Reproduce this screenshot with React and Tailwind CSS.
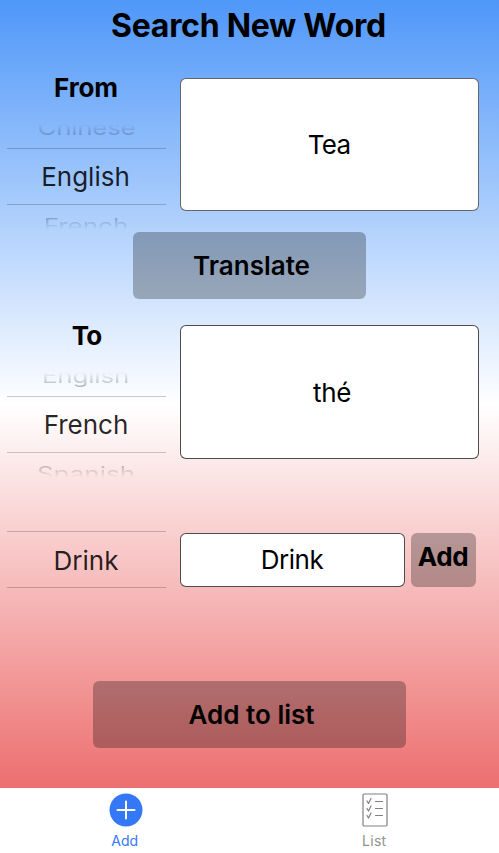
function Wheel({ before, value, after, className = '' }) {
  return (
    <div className={`w-[159px] text-center text-[26px] ${className}`}>
      {before && (
        <div className="flex h-[26px] items-start justify-center text-black/25 [mask-image:linear-gradient(to_bottom,transparent_8%,black_60%)]">
          {before}
        </div>
      )}
      <div className="flex h-[57px] items-center justify-center border-y border-black/20 font-[380] text-black/85">
        {value}
      </div>
      {after && (
        <div className="flex h-[27px] items-start justify-center text-black/25 [mask-image:linear-gradient(to_bottom,black_40%,transparent_92%)]">
          {after}
        </div>
      )}
    </div>
  );
}

function Ghost({ children, className = '' }) {
  return <span className={`inline-block h-5 origin-top scale-y-75 leading-5 font-[380] ${className}`}>{children}</span>;
}

export default function App() {
  return (
    <div className="flex h-[853px] w-[499px] flex-col overflow-hidden bg-white font-['Inter','Liberation_Sans',sans-serif] text-black">
      <main className="flex h-[788px] shrink-0 flex-col bg-[linear-gradient(to_bottom,#4f97f9_0px,#ffffff_405px,#ed6f6f_788px)]">
        <h1 className="h-[78px] pt-1.5 pr-0.5 text-center text-[32px] leading-10 font-bold tracking-[-0.27px]">
          Search New Word
        </h1>

        <section className="flex h-[154px] pl-[7px]">
          <div>
            <h2 className="mb-6 h-5 pr-px text-center text-[26px] leading-5 font-bold tracking-[-0.1px]">From</h2>
            <Wheel
              before={<Ghost className="-mt-px tracking-[-0.3px]">Chinese</Ghost>}
              value={<span className="pr-0.5">English</span>}
              after={<Ghost className="mt-[14px] pr-px">French</Ghost>}
            />
          </div>
          <div className="ml-[13.5px] flex h-[133px] w-[299px] items-center justify-center rounded-md border border-black/60 bg-white pb-px text-[26px] font-[380] tracking-[-0.7px]">
            Tea
          </div>
        </section>

        <button className="h-[67px] w-[233px] shrink-0 self-center rounded-md bg-black/27 pl-1 text-[26px] font-semibold">
          Translate
        </button>

        <section className="mt-[26px] flex h-[154px] pl-[7px]">
          <div>
            <h2 className="mb-[26px] h-5 pt-px text-center text-[26px] leading-5 font-bold tracking-[-0.8px]">To</h2>
            <Wheel
              className="-mt-[1.5px]"
              before={<Ghost className="-mt-px pr-0.5 tracking-[-0.2px]">English</Ghost>}
              value={<span className="pr-px">French</span>}
              after={<Ghost className="mt-[14px] pr-px">Spanish</Ghost>}
            />
          </div>
          <div className="ml-[13.5px] flex h-[134px] w-[299px] items-center justify-center rounded-md border border-black/70 bg-white pl-1.5 text-[26px] font-[380] tracking-[-0.4px]">
            thé
          </div>
        </section>

        <section className="mt-[52px] flex h-[58px] items-start pl-[7px]">
          <Wheel value={<span className="pt-px pr-px">Drink</span>} />
          <div className="mt-0.5 ml-[13.5px] flex h-[54px] w-[225px] items-center justify-center rounded-md border border-black/70 bg-white pb-0.5 text-[26px] font-[380] tracking-[-0.5px]">
            Drink
          </div>
          <button className="mt-0.5 ml-1.5 h-[54px] w-[65px] rounded-md bg-black/27 pb-[7px] text-[26px] font-bold tracking-[-0.4px]">
            Add
          </button>
        </section>

        <button className="mt-[92px] h-[67px] w-[313px] shrink-0 self-center rounded-md bg-black/27 pl-1 text-[26px] font-semibold">
          Add to list
        </button>
      </main>

      <nav className="grid h-[65px] grid-cols-2 text-sm">
        <div className="flex flex-col items-center pt-[5px] text-[#3478f6]">
          <svg className="ml-0.5" width="34" height="34" viewBox="0 0 34 34" fill="none">
            <circle cx="17" cy="17" r="16.5" fill="#3478f6" />
            <path d="M17 8.500v17M8.500 17h17" stroke="white" strokeWidth="2" strokeLinecap="round" />
          </svg>
          <span className="mt-1 leading-5">Add</span>
        </div>
        <div className="flex flex-col items-center pt-[5px] text-[#929292]">
          <svg className="ml-0.5" width="26" height="34" viewBox="0 0 26 34" fill="none" stroke="#808080" strokeWidth="1.2" strokeLinecap="round" strokeLinejoin="round">
            <rect x="1" y="1" width="24" height="32" rx="1.2" />
            <path d="M5 8l1.500 2.500L9 5.500M13.500 8.500h7M5 15.500l1.500 2.500L9 13M13.500 15.500h7M5 22.500l1.500 2.500L9 20M13.500 22.500h7" />
          </svg>
          <span className="mt-1 leading-5 tracking-[0.3px]">List</span>
        </div>
      </nav>
    </div>
  );
}
